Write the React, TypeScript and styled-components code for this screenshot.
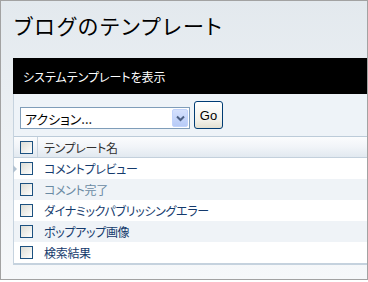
import React from "react";
import styled, { createGlobalStyle } from "styled-components";

const Global = createGlobalStyle`
  html, body { margin: 0; padding: 0; background: #ffffff; }
  body { font-family: "Noto Sans CJK JP", "Noto Sans", sans-serif; }
  * { box-sizing: border-box; }
`;

const Frame = styled.div`
  width: 368px;
  height: 280px;
  border: 1px solid #a2a2a2;
  background: linear-gradient(#e3e9ee, #f6f8fa);
  display: flex;
  flex-direction: column;
  overflow: hidden;
`;

const Title = styled.h1`
  margin: 0;
  height: 57px;
  padding: 9px 0 0 13px;
  font-size: 21px;
  font-weight: normal;
  line-height: 30px;
  color: #000;
  font-family: "Noto Sans CJK JP", sans-serif;
  font-feature-settings: "palt";
  letter-spacing: 2px;
`;

const Panel = styled.div`
  margin-left: 12px;
  display: flex;
  flex-direction: column;
`;

const BlackBar = styled.div`
  height: 36px;
  background: #000;
  color: #fff;
  font-size: 12px;
  font-feature-settings: "palt";
  padding-left: 10px;
  display: flex;
  align-items: center;
`;

const Body = styled.div`
  background: #eef3f8;
  border-left: 1px solid #c6d3df;
`;

const ActionRow = styled.div`
  height: 42px;
  display: flex;
  align-items: flex-end;
  gap: 4px;
  padding: 0 0 7px 6px;
`;

const Select = styled.div`
  width: 170px;
  height: 22px;
  border: 1px solid #7f9db9;
  background: #fff;
  display: flex;
  align-items: center;
  justify-content: space-between;
  padding: 0 1px 0 4px;
  font-size: 13px;
  font-feature-settings: "palt";
  color: #000;
`;

const DropBtn = styled.div`
  width: 16px;
  height: 18px;
  border-radius: 2px;
  background: linear-gradient(#d5e1fd, #b7cbf7);
  border: 1px solid #c1d3fb;
  display: flex;
  align-items: center;
  justify-content: center;
`;

const GoButton = styled.button`
  width: 29px;
  height: 28px;
  padding: 0;
  border: 1px solid #003c74;
  border-radius: 3px;
  background: linear-gradient(#ffffff, #f2f1ea 70%, #e3e0d2);
  font-family: "Liberation Sans", Arial, sans-serif;
  font-size: 13px;
  color: #000;
`;

const Table = styled.div`
  border-top: 1px solid #bccbd9;
  border-bottom: 2px solid #c5d2de;
  background: #fff;
`;

const HeaderRow = styled.div`
  height: 21px;
  display: flex;
  align-items: stretch;
  background: linear-gradient(#fbfcfd, #f1f4f8 50%, #e2e9f0);
  border-bottom: 1px solid #c3d0dc;
`;

const Row = styled.div<{ $alt?: boolean }>`
  position: relative;
  height: 21px;
  display: flex;
  align-items: stretch;
  background: ${(p) => (p.$alt ? "#eff3f7" : "#ffffff")};
`;

const CheckCell = styled.div<{ $divider?: boolean }>`
  width: 24px;
  display: flex;
  align-items: center;
  padding-left: 6px;
  border-right: ${(p) => (p.$divider ? "1px solid #c9d4df" : "none")};
`;

const Check = styled.span`
  width: 13px;
  height: 13px;
  border: 1px solid #1c5180;
  background: linear-gradient(135deg, #dcdcd5, #f4f4f1 70%, #ffffff);
  display: block;
`;

const NameCell = styled.div<{ $tone?: "head" | "link" | "muted" }>`
  display: flex;
  align-items: center;
  padding-left: 6px;
  font-size: 12px;
  font-feature-settings: "palt";
  letter-spacing: -0.3px;
  color: ${(p) =>
    p.$tone === "head" ? "#303030" : p.$tone === "muted" ? "#6a8aa3" : "#143a6c"};
`;

const Marker = styled.span`
  position: absolute;
  left: -1px;
  top: 7px;
  width: 0;
  height: 0;
  border-top: 4px solid transparent;
  border-bottom: 4px solid transparent;
  border-left: 4px solid #b3c3d2;
`;

const rows: { name: string; muted?: boolean; marker?: boolean }[] = [
  { name: "コメントプレビュー", marker: true },
  { name: "コメント完了", muted: true },
  { name: "ダイナミックパブリッシングエラー" },
  { name: "ポップアップ画像" },
  { name: "検索結果" },
];

export default function App() {
  return (
    <>
      <Global />
      <Frame>
        <Title>ブログのテンプレート</Title>
        <Panel>
          <BlackBar>システムテンプレートを表示</BlackBar>
          <Body>
            <ActionRow>
              <Select>
                <span>アクション...</span>
                <DropBtn>
                  <svg width="9" height="7" viewBox="0 0 9 7">
                    <path d="M1 1.5 L4.5 5 L8 1.5" fill="none" stroke="#4d6185" strokeWidth="2" />
                  </svg>
                </DropBtn>
              </Select>
              <GoButton>Go</GoButton>
            </ActionRow>
            <Table>
              <HeaderRow>
                <CheckCell $divider>
                  <Check />
                </CheckCell>
                <NameCell $tone="head">テンプレート名</NameCell>
              </HeaderRow>
              {rows.map((r, i) => (
                <Row key={r.name} $alt={i % 2 === 1}>
                  {r.marker && <Marker />}
                  <CheckCell>
                    <Check />
                  </CheckCell>
                  <NameCell $tone={r.muted ? "muted" : "link"}>{r.name}</NameCell>
                </Row>
              ))}
            </Table>
          </Body>
        </Panel>
      </Frame>
    </>
  );
}
